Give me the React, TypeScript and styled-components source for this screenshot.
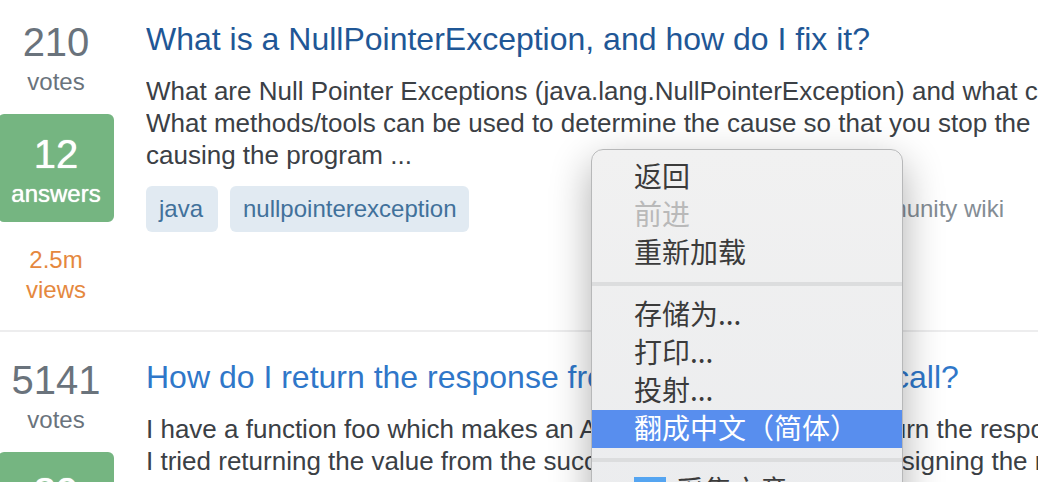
import React from "react";
import styled, { createGlobalStyle } from "styled-components";

const GlobalStyle = createGlobalStyle`
  * { box-sizing: border-box; }
  html, body, #root { height: 100%; }
  body {
    margin: 0;
    background: #ffffff;
    overflow: hidden;
    font-family: "Liberation Sans", "Noto Sans CJK SC", Arial, sans-serif;
    font-size: 24px;
  }
`;

const Page = styled.main`
  height: 100%;
  overflow: hidden;
`;

const QuestionList = styled.div`
  margin: -6px 0 0 -2px;
`;

const Question = styled.article`
  display: flex;
  gap: 32px;
  padding: 24px 0 25px;
  border-bottom: 2px solid #ededee;
`;

const Stats = styled.div`
  flex: none;
  width: 116px;
  text-align: center;
`;

const Stat = styled.div<{ $answered?: boolean }>`
  color: ${(p) => (p.$answered ? "#ffffff" : "#6a737c")};
  background: ${(p) => (p.$answered ? "#75b581" : "transparent")};
  padding: ${(p) => (p.$answered ? "16px 0 12px" : "0")};
  margin-top: ${(p) => (p.$answered ? "16px" : "0")};
  border-radius: 6px;
  text-shadow: ${(p) => (p.$answered ? "0 0 1px #ffffff" : "none")};
`;

const Count = styled.div`
  font-size: 40px;
  line-height: 48px;
`;

const Label = styled.div`
  line-height: 32px;
`;

const Views = styled.div`
  margin-top: 23px;
  line-height: 30px;
  color: #e5883e;
`;

const Summary = styled.div`
  flex: 1;
  min-width: 0;
  overflow: hidden;
  white-space: nowrap;
`;

const Title = styled.h3`
  margin: 0 0 15px;
  font-size: 32px;
  font-weight: 400;
  line-height: 42px;
`;

const TitleLink = styled.a<{ $visited?: boolean }>`
  color: ${(p) => (p.$visited ? "#1f5796" : "#2f77c9")};
  text-decoration: none;
`;

const Excerpt = styled.p`
  margin: 0 0 15px;
  font-size: 26px;
  line-height: 32px;
  color: #3b4045;
`;

const Footer = styled.div`
  display: flex;
  align-items: center;
  gap: 12px;
  padding-right: 34px;
`;

const Tag = styled.a`
  min-width: 72px;
  padding: 0 13px;
  line-height: 46px;
  border-radius: 6px;
  background: #e1eaf2;
  color: #41719b;
  text-decoration: none;
`;

const Wiki = styled.span`
  margin-left: auto;
  color: #848d95;
`;

const Menu = styled.div`
  position: absolute;
  left: 591px;
  top: 149px;
  width: 312px;
  padding: 8px 0;
  border: 1px solid #b7b8b9;
  border-radius: 12px;
  background: linear-gradient(#f1f1f1, #ebecee);
  box-shadow: 0 14px 40px rgba(0, 0, 0, 0.32);
`;

const MenuItem = styled.button<{ $active?: boolean }>`
  display: flex;
  align-items: center;
  gap: 10px;
  width: 100%;
  height: 38px;
  padding: 0 42px 4px;
  border: 0;
  background: ${(p) => (p.$active ? "#588eee" : "transparent")};
  color: ${(p) => (p.$active ? "#ffffff" : "#3b3b3b")};
  font-family: "Noto Sans CJK SC", sans-serif;
  font-size: 28px;
  line-height: 34px;
  text-align: left;
  white-space: nowrap;

  &:disabled { color: #b9b9b9; }
`;

const Separator = styled.hr`
  height: 4px;
  margin: 10px 0;
  border: 0;
  background: #dcddde;
`;

const ClipIcon = () => (
  <svg width="32" height="32" viewBox="0 0 32 32" aria-hidden="true">
    <rect y="4" width="32" height="28" fill="#55a5f1" />
  </svg>
);

type QuestionData = {
  votes: string;
  answers: string;
  views: string;
  title: string;
  visited?: boolean;
  excerpt: string[];
  tags: string[];
  wiki?: boolean;
};

const questions: QuestionData[] = [
  {
    votes: "210",
    answers: "12",
    views: "2.5m",
    title: "What is a NullPointerException, and how do I fix it?",
    visited: true,
    excerpt: [
      "What are Null Pointer Exceptions (java.lang.NullPointerException) and what causes them?",
      "What methods/tools can be used to determine the cause so that you stop the exception from",
      "causing the program ...",
    ],
    tags: ["java", "nullpointerexception"],
    wiki: true,
  },
  {
    votes: "5141",
    answers: "39",
    views: "1.4m",
    title: "How do I return the response from an asynchronous call?",
    excerpt: [
      "I have a function foo which makes an Ajax request. How can I return the response from foo?",
      "I tried returning the value from the success callback, as well as assigning the response to a",
    ],
    tags: ["javascript", "ajax"],
  },
];

export default function App() {
  return (
    <>
      <GlobalStyle />
      <Page>
        <QuestionList>
          {questions.map((q) => (
            <Question key={q.title}>
              <Stats>
                <Stat>
                  <Count>{q.votes}</Count>
                  <Label>votes</Label>
                </Stat>
                <Stat $answered>
                  <Count>{q.answers}</Count>
                  <Label>answers</Label>
                </Stat>
                <Views>
                  {q.views}
                  <br />
                  views
                </Views>
              </Stats>
              <Summary>
                <Title>
                  <TitleLink href="#" $visited={q.visited}>{q.title}</TitleLink>
                </Title>
                <Excerpt>
                  {q.excerpt.map((line) => (
                    <React.Fragment key={line}>
                      {line}
                      <br />
                    </React.Fragment>
                  ))}
                </Excerpt>
                <Footer>
                  {q.tags.map((t) => (
                    <Tag href="#" key={t}>{t}</Tag>
                  ))}
                  {q.wiki && <Wiki>community wiki</Wiki>}
                </Footer>
              </Summary>
            </Question>
          ))}
        </QuestionList>
        <Menu role="menu">
          <MenuItem role="menuitem">返回</MenuItem>
          <MenuItem role="menuitem" disabled>前进</MenuItem>
          <MenuItem role="menuitem">重新加载</MenuItem>
          <Separator />
          <MenuItem role="menuitem">存储为...</MenuItem>
          <MenuItem role="menuitem">打印...</MenuItem>
          <MenuItem role="menuitem">投射...</MenuItem>
          <MenuItem role="menuitem" $active>翻成中文（简体）</MenuItem>
          <Separator />
          <MenuItem role="menuitem">
            <ClipIcon />
            采集文章
          </MenuItem>
        </Menu>
      </Page>
    </>
  );
}
